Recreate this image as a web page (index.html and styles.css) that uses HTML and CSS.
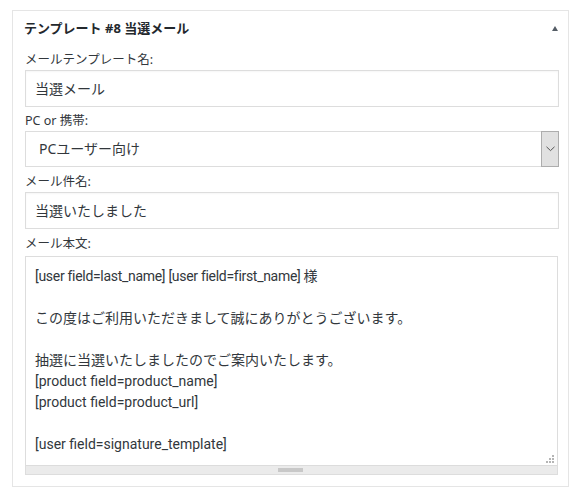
FILE: index.html
```html
<!DOCTYPE html>
<html lang="ja">
<head>
<meta charset="utf-8">
<title>テンプレート #8 当選メール</title>
<link rel="stylesheet" href="styles.css">
</head>
<body>
<div class="postbox">
  <div class="hndle">
    <h2 class="title">テンプレート #8 当選メール</h2>
    <span class="toggle"></span>
  </div>
  <div class="inside">
    <label class="lbl">メールテンプレート名:</label>
    <div class="field">当選メール</div>
    <label class="lbl l2">PC or 携帯:</label>
    <div class="select">
      <span class="sel-text">PCユーザー向け</span>
      <span class="sel-btn"><svg width="9" height="6" viewBox="0 0 9 6"><path d="M0.5 0.8 L4.5 4.6 L8.5 0.8" fill="none" stroke="#555" stroke-width="1"/></svg></span>
    </div>
    <label class="lbl l3">メール件名:</label>
    <div class="field">当選いたしました</div>
    <label class="lbl l4">メール本文:</label>
    <div class="textarea">
      <div class="ta-body">
        <p class="tight">[user field=last_name] [user field=first_name] 様</p>
        <p>&nbsp;</p>
        <p>この度はご利用いただきまして誠にありがとうございます。</p>
        <p>&nbsp;</p>
        <p>抽選に当選いたしましたのでご案内いたします。</p>
        <p>[product field=product_name]</p>
        <p>[product field=product_url]</p>
        <p>&nbsp;</p>
        <p>[user field=signature_template]</p>
        <span class="grip">
          <i></i><i></i><i></i><i></i><i></i><i></i>
        </span>
      </div>
      <div class="hscroll"><span class="thumb"></span></div>
    </div>
  </div>
</div>
</body>
</html>
```

FILE: styles.css
```css
* { box-sizing: border-box; }
html, body { margin: 0; padding: 0; background: #fff; }
body {
  font-family: "Noto Sans", "Noto Sans CJK JP", sans-serif;
  color: #32373c;
  padding: 10px 0 0 12px;
}
.postbox {
  width: 557px;
  height: 477px;
  border: 1px solid #e5e5e5;
  background: #fff;
}
.hndle {
  display: flex;
  align-items: center;
  justify-content: space-between;
  padding: 7px 9px 0 11px;
  height: 39px;
}
.title {
  margin: 0;
  font-size: 13px;
  line-height: 20px;
  font-weight: 700;
  color: #23282d;
  padding-bottom: 12px;
}
.toggle {
  width: 0; height: 0;
  border-left: 3px solid transparent;
  border-right: 3px solid transparent;
  border-bottom: 5px solid #555d66;
  margin-bottom: 12px;
  margin-right: 1px;
}
.inside {
  display: flex;
  flex-direction: column;
  padding: 0 9px 0 12px;
}
.lbl {
  display: block;
  font-size: 12.5px;
  line-height: 20px;
  height: 20px;
  color: #32373c;
}
.l2 { margin-top: 4px; }
.l3 { margin-top: 5px; }
.l4 { margin-top: 5px; margin-bottom: 2px; }
.field {
  height: 37px;
  border: 1px solid #ddd;
  box-shadow: inset 0 1px 2px rgba(0,0,0,0.04);
  font-size: 14px;
  line-height: 35px;
  padding: 0 9px;
  color: #32373c;
}
.select {
  height: 36px;
  border: 1px solid #ddd;
  display: flex;
  align-items: stretch;
  font-size: 14px;
}
.sel-text {
  flex: 1;
  line-height: 34px;
  padding-left: 13px;
}
.sel-btn {
  width: 18px;
  background: #e1e1e1;
  border: 1px solid #adadad;
  display: flex;
  align-items: center;
  justify-content: center;
  margin: -1px -1px -1px 0;
}
.textarea {
  height: 219px;
  width: 533px;
  border: 1px solid #ddd;
  display: flex;
  flex-direction: column;
}
.ta-body {
  flex: 1;
  position: relative;
  padding: 9px 9px 0 9px;
  font-family: Roboto, "Noto Sans CJK JP", sans-serif;
  font-size: 14px;
  line-height: 21px;
  color: #32373c;
}
.ta-body p { margin: 0; white-space: nowrap; height: 21px; }
.ta-body .tight { letter-spacing: -0.3px; }
.hscroll {
  height: 9px;
  background: #ebebeb;
  border-top: 1px solid #dcdcdc;
  display: flex;
  justify-content: center;
  align-items: center;
}
.thumb {
  width: 25px;
  height: 4px;
  background: #c8c8c8;
  margin-left: -2px;
}
.grip {
  position: absolute;
  right: 3px;
  bottom: 2px;
  width: 8px;
  height: 8px;
}
.grip i {
  position: absolute;
  width: 2px; height: 2px;
  background: #b5b5b5;
}
.grip i:nth-child(1) { right: 0; top: 0; }
.grip i:nth-child(2) { right: 3px; top: 3px; }
.grip i:nth-child(3) { right: 0; top: 3px; }
.grip i:nth-child(4) { right: 6px; top: 6px; }
.grip i:nth-child(5) { right: 3px; top: 6px; }
.grip i:nth-child(6) { right: 0; top: 6px; }
```
